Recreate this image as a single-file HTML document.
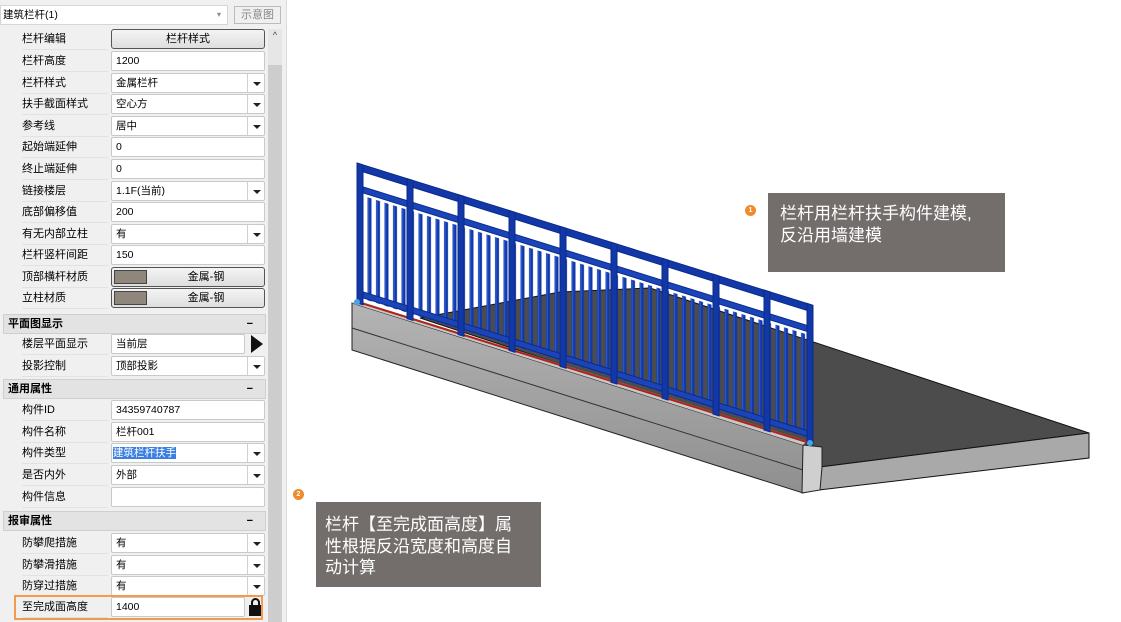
<!DOCTYPE html>
<html><head><meta charset="utf-8"><style>
*{margin:0;padding:0;box-sizing:border-box}
body{width:1121px;height:622px;background:#fff;position:relative;overflow:hidden;font-family:"Liberation Sans","Noto Sans CJK SC",sans-serif;font-size:11px;color:#000}
#panel{position:absolute;left:0;top:0;width:287px;height:622px;background:#f0f0f0;border-right:1px solid #dcdcdc}
.a{position:absolute}
.lbl{position:absolute;left:22px;width:86px;height:21px;line-height:21px;border-bottom:1px solid #e2e2e2}
.val{position:absolute;left:111px;width:154px;height:20px;background:#fff;border:1px solid #c9c9c9;border-radius:2px;line-height:18px;padding-left:4px;font-size:10.5px}
.dd::after{content:"";position:absolute;right:3px;top:8px;border-left:4px solid transparent;border-right:4px solid transparent;border-top:4px solid #222}
.dd::before{content:"";position:absolute;right:16px;top:0;height:18px;border-left:1px solid #d0d0d0}
.btn{position:absolute;left:111px;width:154px;height:20px;background:linear-gradient(#f4f4f4,#dedede);border:1px solid #555;border-radius:3px;text-align:center;line-height:18px}
.sw{position:absolute;left:2px;top:2px;width:33px;height:14px;background:#8f877c;border:1px solid #444}
.hdr{position:absolute;left:3px;width:263px;height:20px;background:#e3e3e3;border:1px solid #cfcfcf;font-weight:bold;line-height:18px;padding-left:4px}
.hdr::after{content:"−";position:absolute;right:12px;font-weight:bold}
.call{position:absolute;background:#736e6c;color:#fff;font-size:17px;line-height:21.5px}
.badge{position:absolute;width:11px;height:11px;border-radius:50%;background:#f08a2c;color:#fff;font-size:7px;line-height:11px;text-align:center;font-weight:bold}
</style></head><body>
<div id="panel">
<div class="a" style="left:0;top:5px;width:228px;height:20px;background:#fff;border:1px solid #d6d6d6;line-height:18px;padding-left:2px;font-size:10.5px">建筑栏杆(1)<span style="position:absolute;right:6px;color:#888;font-size:8px">▾</span></div>
<div class="a" style="left:234px;top:6px;width:47px;height:18px;border:1px solid #bbb;color:#888;text-align:center;line-height:16px">示意图</div>
<div class="a" style="left:268px;top:29px;width:14px;height:593px;background:#e6e6e6"></div>
<div class="a" style="left:268px;top:65px;width:14px;height:557px;background:#cdcdcd"></div>
<div class="a" style="left:268px;top:30px;width:14px;height:18px;text-align:center;font-size:9px;color:#444">^</div>

<div class="lbl" style="top:29px">栏杆编辑</div><div class="btn" style="top:29px">栏杆样式</div>
<div class="lbl" style="top:51px">栏杆高度</div><div class="val" style="top:51px">1200</div>
<div class="lbl" style="top:73px">栏杆样式</div><div class="val dd" style="top:73px">金属栏杆</div>
<div class="lbl" style="top:94px">扶手截面样式</div><div class="val dd" style="top:94px">空心方</div>
<div class="lbl" style="top:116px">参考线</div><div class="val dd" style="top:116px">居中</div>
<div class="lbl" style="top:137px">起始端延伸</div><div class="val" style="top:137px">0</div>
<div class="lbl" style="top:159px">终止端延伸</div><div class="val" style="top:159px">0</div>
<div class="lbl" style="top:181px">链接楼层</div><div class="val dd" style="top:181px">1.1F(当前)</div>
<div class="lbl" style="top:202px">底部偏移值</div><div class="val" style="top:202px">200</div>
<div class="lbl" style="top:224px">有无内部立柱</div><div class="val dd" style="top:224px">有</div>
<div class="lbl" style="top:245px">栏杆竖杆间距</div><div class="val" style="top:245px">150</div>
<div class="lbl" style="top:267px">顶部横杆材质</div><div class="btn" style="top:267px;padding-left:36px"><span class="sw"></span>金属-钢</div>
<div class="lbl" style="top:288px">立柱材质</div><div class="btn" style="top:288px;padding-left:36px"><span class="sw"></span>金属-钢</div>

<div class="hdr" style="top:314px">平面图显示</div>
<div class="lbl" style="top:334px">楼层平面显示</div><div class="val" style="top:334px;width:134px">当前层</div>
<div class="a" style="left:251px;top:335px;border-top:9px solid transparent;border-bottom:9px solid transparent;border-left:12px solid #111"></div>
<div class="lbl" style="top:356px">投影控制</div><div class="val dd" style="top:356px">顶部投影</div>

<div class="hdr" style="top:379px">通用属性</div>
<div class="lbl" style="top:400px">构件ID</div><div class="val" style="top:400px">34359740787</div>
<div class="lbl" style="top:422px">构件名称</div><div class="val" style="top:422px">栏杆001</div>
<div class="lbl" style="top:443px">构件类型</div><div class="val dd" style="top:443px;padding-left:1px"><span style="background:#3b7fe0;color:#fff">建筑栏杆扶手</span></div>
<div class="lbl" style="top:465px">是否内外</div><div class="val dd" style="top:465px">外部</div>
<div class="lbl" style="top:487px">构件信息</div><div class="val" style="top:487px"></div>

<div class="hdr" style="top:511px">报审属性</div>
<div class="lbl" style="top:533px">防攀爬措施</div><div class="val dd" style="top:533px">有</div>
<div class="lbl" style="top:555px">防攀滑措施</div><div class="val dd" style="top:555px">有</div>
<div class="lbl" style="top:576px">防穿过措施</div><div class="val dd" style="top:576px">有</div>
<div class="lbl" style="top:597px">至完成面高度</div><div class="val" style="top:597px;width:134px">1400</div>
<div class="a" style="left:249px;top:598px;width:13px;height:18px">
<div style="position:absolute;left:2px;top:0;width:9px;height:9px;border:2px solid #111;border-radius:5px 5px 0 0"></div>
<div style="position:absolute;left:0;top:7px;width:13px;height:11px;background:#111"></div></div>
<div class="a" style="left:14px;top:595px;width:249px;height:25px;border:2px solid #f39a4e"></div>
</div>

<svg class="a" style="left:0;top:0" width="1121" height="622">
<defs>
<pattern id="bal" width="8.5" height="200" patternUnits="userSpaceOnUse"><rect x="2" y="0" width="4" height="200" fill="#1238a8"/><rect x="2.5" y="0" width="1.2" height="200" fill="#2a5ad6"/></pattern>
<linearGradient id="cf" x1="0" y1="0" x2="0" y2="1"><stop offset="0" stop-color="#b4b4b4"/><stop offset="1" stop-color="#8f8f8f"/></linearGradient>
</defs>
<polygon points="420,318 560,292 650,288 1089,433 820,467 803,444" fill="#4c4c4c" stroke="#111" stroke-width="1"/>
<polygon points="820,467 1089,433 1089,458 802,492" fill="#a9a9a9" stroke="#111" stroke-width="1"/>
<polygon points="352,303 803,445 803,493 352,350" fill="url(#cf)" stroke="#222" stroke-width="1"/>
<line x1="352" y1="328" x2="803" y2="470" stroke="#333"/>
<polygon points="803,445 822,447 822,467 820,490 802,493" fill="#cfcfcf" stroke="#222" stroke-width="1"/>
<polygon points="352,303 356,300 807,441 803,445" fill="#c8c8c8"/>
<line x1="358" y1="302" x2="810" y2="443" stroke="#b0221a" stroke-width="2"/>
<g transform="translate(357,163) skewY(17.33)">
<rect x="0" y="31" width="455" height="103" fill="url(#bal)"/>
<rect x="0" y="0" width="455" height="7" fill="#1238a8" stroke="#0a2a8a" stroke-width="1"/>
<rect x="0" y="22" width="455" height="6" fill="#1a44b8" stroke="#0a2a8a" stroke-width="1"/>
<rect x="0" y="127" width="455" height="6" fill="#1a44b8" stroke="#0a2a8a" stroke-width="1"/>
<g fill="#1238a8" stroke="#0a2a8a" stroke-width="1">
<rect x="0" y="0" width="6" height="140"/><rect x="50" y="0" width="6" height="140"/><rect x="101" y="0" width="6" height="140"/><rect x="152" y="0" width="6" height="140"/><rect x="203" y="0" width="6" height="140"/><rect x="254" y="0" width="6" height="140"/><rect x="305" y="0" width="6" height="140"/><rect x="356" y="0" width="6" height="140"/><rect x="407" y="0" width="6" height="140"/><rect x="450" y="0" width="6" height="140"/>
</g></g>
<circle cx="357" cy="302" r="3" fill="#4aa3e0"/><circle cx="810" cy="443" r="3" fill="#4aa3e0"/>
</svg>

<div class="badge" style="left:745px;top:205px">1</div>
<div class="call" style="left:768px;top:193px;width:237px;height:79px;padding:10px 0 0 12px">栏杆用栏杆扶手构件建模,<br>反沿用墙建模</div>
<div class="badge" style="left:293px;top:489px">2</div>
<div class="call" style="left:316px;top:502px;width:225px;height:85px;padding:12px 0 0 9px">栏杆【至完成面高度】属<br>性根据反沿宽度和高度自<br>动计算</div>
</body></html>
